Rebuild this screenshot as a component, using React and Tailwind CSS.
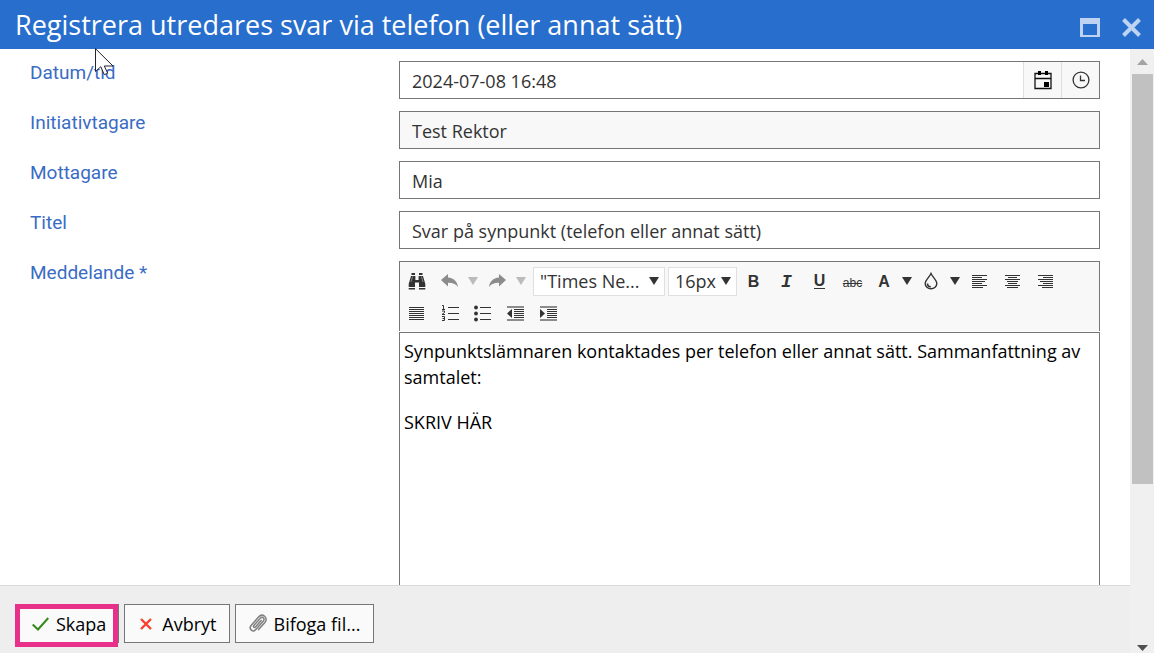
import React, { useState } from 'react';

const ICON_BUTTON = 'flex h-8 w-[33px] items-center justify-center text-[#333] hover:bg-gray-200';
const SPLIT_BUTTON = 'flex h-8 w-8 items-center justify-center text-[#333] hover:bg-gray-200';
const CARET_BUTTON = 'flex h-8 w-4 items-center justify-center text-[#333] hover:bg-gray-200';
const FIELD = 'h-[38px] w-full border border-[#767676] px-3 pt-[2px] text-lg text-[#333] outline-none';
const LABEL = 'pt-[2px] font-[Roboto,sans-serif] text-[19px] leading-5 text-[#3a6cc4]';
const FOOTER_BUTTON = 'relative flex h-[39px] items-center border border-[#767676] bg-[#fafafa] text-lg text-black hover:bg-white';

function Caret() {
  return (
    <svg width="10" height="8" viewBox="0 0 10 8" fill="currentColor" aria-hidden="true">
      <path d="M0 0h10L5 8z" />
    </svg>
  );
}

// Horizontal strokes given as [x, y, width] rows
function Lines({ rows, children }) {
  return (
    <svg width="17" height="17" viewBox="0 0 17 17" fill="currentColor" aria-hidden="true">
      {rows.map(([x, y, w]) => (
        <rect key={`${x}-${y}`} x={x} y={y} width={w} height="1" />
      ))}
      {children}
    </svg>
  );
}

const indentRows = [[7, 4, 10], [7, 6, 10], [7, 8, 10], [7, 10, 10], [7, 12, 10]];

function IndentBars() {
  return <path d="M0 1h17v2H0zM0 14h17v2H0z" fill="#8c8c8c" />;
}

function BinocularsIcon() {
  return (
    <svg width="18" height="17" viewBox="0 0 18 17" fill="currentColor" aria-hidden="true">
      <path d="M3.5 0H7v2H3.5zM11 0h3.5v2H11zM3 3h4.4v4h3.2V3H15l2.3 8v3H11v-4.5H7V14H.7v-3zM.7 15H7v1.6H.7zM11 15h6.3v1.6H11z" />
      <path d="M4.5 3.5 3 9M13.5 3.5 15 9" stroke="#999" strokeWidth="0.8" />
    </svg>
  );
}

function ArrowIcon({ flip }) {
  return (
    <svg width="17" height="14" viewBox="0 0 17 14" fill="#8c8c8c" aria-hidden="true">
      <path d={flip ? 'M17 6 10 0v3.500C4 4 .8 7.500 0 13c2.300-3.200 5.600-4.300 10-4.200V12.500z' : 'M0 6 7 0v3.500C13 4 16.200 7.500 17 13c-2.300-3.200-5.600-4.300-10-4.200V12.500z'} />
    </svg>
  );
}

function CalendarIcon() {
  return (
    <svg width="18" height="19" viewBox="0 0 18 19" fill="none" stroke="#111" aria-hidden="true">
      <path d="M1 2.500h16v15H1zM1 7.500h16" strokeWidth="1.300" />
      <path d="M4 0h3v4H4zM11 0h3v4h-3zM10 11h5v5h-5z" fill="#000" stroke="none" />
    </svg>
  );
}

function ClockIcon() {
  return (
    <svg width="18" height="18" viewBox="0 0 18 18" fill="none" stroke="#333" aria-hidden="true">
      <circle cx="9" cy="9" r="7.900" strokeWidth="1.300" />
      <path d="M8.500 4.500v5H13" strokeWidth="1.300" />
    </svg>
  );
}

function DropIcon() {
  return (
    <svg width="14" height="18" viewBox="0 0 14 18" fill="none" stroke="currentColor" strokeWidth="1.400" aria-hidden="true">
      <path d="M7 1.500C5.500 5 1.200 8 1.200 11.500a5.800 5.300 0 0 0 11.600 0C12.800 8 8.500 5 7 1.500z" />
      <path d="M3.500 11.500c0 2 1.300 3.300 3.300 3.300" strokeWidth="1.600" />
    </svg>
  );
}

function ClipIcon() {
  return (
    <svg width="18" height="20" viewBox="0 0 18 20" fill="none" stroke="#808080" strokeWidth="1.500" strokeLinecap="round" aria-hidden="true">
      <path d="M12.200 6.500 6.400 13c-1 1.100-2.600-.3-1.600-1.400l6.500-7.300c2.100-2.300 5.100.3 3.100 2.600l-7.600 8.700c-2.900 3.300-7.500-.7-4.700-4L9.500 3c3.900-4.500 10.300.8 6.400 5.400l-6.300 7.200" />
    </svg>
  );
}

function TextField({ id, label, value, onChange, readOnly }) {
  return (
    <>
      <label htmlFor={id} className={LABEL}>{label}</label>
      <input
        id={id}
        type="text"
        value={value}
        readOnly={readOnly}
        onChange={(e) => onChange?.(e.target.value)}
        className={`${FIELD} ${readOnly ? 'bg-[#f8f8f8]' : 'bg-white'}`}
      />
    </>
  );
}

function ToolbarSelect({ label, options, className }) {
  return (
    <div className={`relative h-[29px] border border-[#e0e0e0] bg-white ${className}`}>
      <select aria-label={label} className="h-full w-full appearance-none bg-transparent pl-[6px] text-lg leading-6 text-[#333] outline-none">
        {options.map((o) => <option key={o}>{o}</option>)}
      </select>
      <span className="pointer-events-none absolute inset-y-0 right-[5px] flex items-center text-[#333]">
        <Caret />
      </span>
    </div>
  );
}

function Toolbar() {
  return (
    <div role="toolbar" aria-label="Formatering" className="border-x border-t border-[#767676] bg-[#f8f8f8] pt-[3px] pb-[2px]">
      <div className="flex items-center">
        <button type="button" aria-label="Sök" className={ICON_BUTTON}><BinocularsIcon /></button>
        <button type="button" aria-label="Ångra" className={SPLIT_BUTTON}><ArrowIcon /></button>
        <button type="button" aria-label="Ångra flera" className={`${CARET_BUTTON} opacity-30`}><Caret /></button>
        <button type="button" aria-label="Gör om" className={SPLIT_BUTTON}><ArrowIcon flip /></button>
        <button type="button" aria-label="Gör om flera" className={`${CARET_BUTTON} opacity-30`}><Caret /></button>
        <ToolbarSelect label="Teckensnitt" options={['"Times Ne...', 'Arial', 'Verdana']} className="ml-1 w-[132px]" />
        <ToolbarSelect label="Storlek" options={['16px', '18px', '24px']} className="ml-[3px] w-[69px]" />
        <button type="button" aria-label="Fet" className={ICON_BUTTON}>
          <b className="pt-[2px] font-['Liberation_Sans',Arial,sans-serif] text-base">B</b>
        </button>
        <button type="button" aria-label="Kursiv" className={ICON_BUTTON}>
          <i className="pt-[2px] font-['Liberation_Mono',monospace] text-lg font-bold">I</i>
        </button>
        <button type="button" aria-label="Understruken" className={ICON_BUTTON}>
          <span className="border-b border-[#333] font-['Liberation_Sans',Arial,sans-serif] text-base leading-[14px] font-bold">U</span>
        </button>
        <button type="button" aria-label="Genomstruken" className={ICON_BUTTON}>
          <s className="pt-1 font-['Liberation_Sans',Arial,sans-serif] text-xs">abc</s>
        </button>
        <button type="button" aria-label="Textfärg" className="flex h-8 w-[30px] items-center justify-center text-[#333] hover:bg-gray-200">
          <b className="pt-[2px] font-['Liberation_Sans',Arial,sans-serif] text-base">A</b>
        </button>
        <button type="button" aria-label="Välj textfärg" className={CARET_BUTTON}><Caret /></button>
        <button type="button" aria-label="Bakgrundsfärg" className={SPLIT_BUTTON}><DropIcon /></button>
        <button type="button" aria-label="Välj bakgrundsfärg" className={CARET_BUTTON}><Caret /></button>
        <button type="button" aria-label="Vänsterjustera" className={ICON_BUTTON}>
          <Lines rows={[[1, 2, 15], [1, 4, 10], [1, 6, 15], [1, 8, 13], [1, 10, 10], [1, 12, 15], [1, 14, 11]]} />
        </button>
        <button type="button" aria-label="Centrera" className={ICON_BUTTON}>
          <Lines rows={[[1, 2, 15], [4, 4, 9], [1, 6, 15], [3, 8, 11], [4, 10, 9], [1, 12, 15], [3, 14, 11]]} />
        </button>
        <button type="button" aria-label="Högerjustera" className={ICON_BUTTON}>
          <Lines rows={[[1, 2, 15], [6, 4, 10], [1, 6, 15], [3, 8, 13], [6, 10, 10], [1, 12, 15], [5, 14, 11]]} />
        </button>
      </div>
      <div className="flex items-center">
        <button type="button" aria-label="Marginaljustera" className={ICON_BUTTON}>
          <Lines rows={[[1, 2, 15], [1, 4, 15], [1, 6, 15], [1, 8, 15], [1, 10, 15], [1, 12, 15], [1, 14, 15]]} />
        </button>
        <button type="button" aria-label="Numrerad lista" className={ICON_BUTTON}>
          <svg width="18" height="18" viewBox="0 0 18 18" fill="currentColor" aria-hidden="true">
            <path d="M7 3h11v1H7zM7 9h11v1H7zM7 15h11v1H7z" />
            <path d="M1 1.500h1.500V5M1 5.500h3M1 7h2.500v1.500L1 10.500h3M1 12.500h2.500v4H1M1.500 14.500h2" fill="none" stroke="currentColor" />
          </svg>
        </button>
        <button type="button" aria-label="Punktlista" className={ICON_BUTTON}>
          <Lines rows={[[6, 2, 11], [6, 8, 11], [6, 14, 11]]}>
            <circle cx="2" cy="2.500" r="1.900" />
            <circle cx="2" cy="8.500" r="1.900" />
            <circle cx="2" cy="14.500" r="1.900" />
          </Lines>
        </button>
        <button type="button" aria-label="Minska indrag" className={ICON_BUTTON}>
          <Lines rows={indentRows}>
            <IndentBars />
            <path d="M5 4v9L0 8.500z" />
          </Lines>
        </button>
        <button type="button" aria-label="Öka indrag" className={ICON_BUTTON}>
          <Lines rows={indentRows}>
            <IndentBars />
            <path d="M0 4v9l5-4.500z" />
          </Lines>
        </button>
      </div>
    </div>
  );
}

function Scrollbar() {
  return (
    <div className="flex w-6 shrink-0 flex-col items-center bg-[#f0f0f0]" aria-hidden="true">
      <div className="flex h-[25px] items-center justify-center text-[#a3a3a3]">
        <svg width="11" height="6" viewBox="0 0 11 6" fill="currentColor"><path d="M0 6h11L5.500 0z" /></svg>
      </div>
      <div className="w-full flex-1 pr-px pl-[2px]">
        <div className="h-[74%] bg-[#c1c1c1]" />
      </div>
      <div className="flex h-[25px] items-end justify-center pb-[2px] text-[#505050]">
        <svg width="11" height="6" viewBox="0 0 11 6" fill="currentColor"><path d="M0 0h11L5.500 6z" /></svg>
      </div>
    </div>
  );
}

export default function App() {
  const [date, setDate] = useState('2024-07-08 16:48');
  const [recipient, setRecipient] = useState('Mia');
  const [title, setTitle] = useState('Svar på synpunkt (telefon eller annat sätt)');

  return (
    <div className="relative flex h-screen flex-col overflow-hidden bg-white font-['Open_Sans','Noto_Sans',sans-serif]">
      <header className="flex h-[49px] shrink-0 items-center justify-between bg-[#276ecd] pr-[13px] pl-[15px]">
        <h1 className="text-[27px] leading-9 text-white">Registrera utredares svar via telefon (eller annat sätt)</h1>
        <div className="flex items-center gap-[22px] pt-[6px]">
          <button type="button" aria-label="Maximera">
            <svg width="20" height="19" viewBox="0 0 20 19" aria-hidden="true">
              <path d="M0 0h20v19H0zM3 6v11h14V6z" fill="#bed3f1" fillRule="evenodd" />
            </svg>
          </button>
          <button type="button" aria-label="Stäng">
            <svg width="19" height="19" viewBox="0 0 19 19" stroke="#bed3f1" strokeWidth="4" aria-hidden="true">
              <path d="m1.500 1.500 16 16m0-16-16 16" />
            </svg>
          </button>
        </div>
      </header>

      <div className="flex min-h-0 flex-1">
        <div className="flex min-w-0 flex-1 flex-col">
          <form id="reply" className="grid min-h-0 flex-1 grid-cols-[369px_minmax(0,1fr)] grid-rows-[auto_auto_auto_auto_minmax(0,1fr)] gap-y-3 overflow-hidden px-[30px] pt-3">
            <label htmlFor="date" className={LABEL}>Datum/tid</label>
            <div className="flex h-[38px] border border-[#767676]">
              <input
                id="date"
                type="text"
                value={date}
                onChange={(e) => setDate(e.target.value)}
                className="min-w-0 flex-1 px-3 pt-[2px] text-lg text-[#333] outline-none"
              />
              <button type="button" aria-label="Välj datum" className="flex w-[38px] items-center justify-center border-l border-[#e0e0e0] bg-[#f8f8f8]">
                <CalendarIcon />
              </button>
              <button type="button" aria-label="Välj tid" className="flex w-[38px] items-center justify-center border-l border-[#e0e0e0] bg-[#f8f8f8]">
                <ClockIcon />
              </button>
            </div>

            <TextField id="initiator" label="Initiativtagare" value="Test Rektor" readOnly />
            <TextField id="recipient" label="Mottagare" value={recipient} onChange={setRecipient} />
            <TextField id="title" label="Titel" value={title} onChange={setTitle} />

            <span id="message-label" className={LABEL}>Meddelande *</span>
            <div className="flex min-h-0 flex-col gap-px">
              <Toolbar />
              <div
                role="textbox"
                aria-multiline="true"
                aria-labelledby="message-label"
                contentEditable
                suppressContentEditableWarning
                className="min-h-0 flex-1 overflow-hidden border-x border-t border-[#767676] px-1 pt-[5px] text-lg leading-[26px] text-black outline-none"
              >
                <p>Synpunktslämnaren kontaktades per telefon eller annat sätt. Sammanfattning av samtalet:</p>
                <p className="mt-[19px]">SKRIV HÄR</p>
              </div>
            </div>
          </form>

          <footer className="flex h-[68px] shrink-0 items-start gap-[5px] border-t border-[#d9d9d9] bg-[#eeeeee] px-[15px] pt-[18px]">
            <button type="submit" form="reply" className={`${FOOTER_BUTTON} gap-[7px] pr-3 pl-4`}>
              <svg width="17" height="14" viewBox="0 0 17 14" fill="none" stroke="#37881c" strokeWidth="2" aria-hidden="true">
                <path d="m.7 7.500 5.300 5L16.300 1" />
              </svg>
              Skapa
              <span className="pointer-events-none absolute -top-px right-0 -bottom-[5px] -left-px border-5 border-[#e8308a]" />
            </button>
            <button type="button" className={`${FOOTER_BUTTON} gap-[10px] pr-3 pl-[15px]`}>
              <svg width="12" height="12" viewBox="0 0 12 12" fill="none" stroke="#f8402c" strokeWidth="2.400" aria-hidden="true">
                <path d="m1 1 10 10M11 1 1 11" />
              </svg>
              Avbryt
            </button>
            <button type="button" className={`${FOOTER_BUTTON} gap-[7px] px-[13px]`}>
              <ClipIcon />
              Bifoga fil...
            </button>
          </footer>
        </div>
        <Scrollbar />
      </div>

      <svg className="pointer-events-none absolute top-12 left-[95px]" width="20" height="28" viewBox="0 0 20 28" aria-hidden="true">
        <path d="M.500.700v22.800l5.300-4.800 3.500 8 3.400-1.500-3.400-7.200h8.700z" fill="#fff" stroke="#223" />
      </svg>
    </div>
  );
}
